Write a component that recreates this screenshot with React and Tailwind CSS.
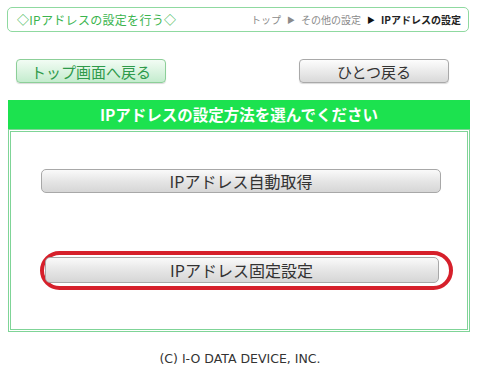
export default function App() {
  const jp = { fontFamily: '"Noto Sans CJK JP", "Noto Sans", sans-serif' };
  return (
    <div className="w-[480px] h-[381px] bg-white overflow-hidden" style={jp}>
      <div className="pt-[7px] pl-[7px] pr-[11px]">
        <div className="h-[25px] border border-[#8fd9a0] rounded-[5px] flex items-center justify-between pl-[9px] pr-[7px]">
          <span className="text-[12px] leading-none text-[#3bb54f] tracking-[0.3px]">◇IPアドレスの設定を行う◇</span>
          <span className="text-[10px] leading-none text-[#8a8a8a] flex items-center">
            <span>トップ</span>
            <span className="text-[8px] mx-[6px]">▶</span>
            <span>その他の設定</span>
            <span className="text-[8px] mx-[6px] text-[#111]">▶</span>
            <span className="font-bold text-[#222]">IPアドレスの設定</span>
          </span>
        </div>
      </div>

      <div className="mt-[27px] pl-[16px] pr-[31px] flex justify-between">
        <div className="w-[150px] h-[24px] rounded-[4px] border border-[#8ccf98] bg-gradient-to-b from-[#f2fcf4] to-[#c4ecce] flex items-center justify-center text-[15px] leading-none text-[#2e9a4a] shadow-[0_1px_1px_rgba(0,0,0,0.15)]">
          トップ画面へ戻る
        </div>
        <div className="w-[150px] h-[24px] rounded-[4px] border border-[#a9a9a9] bg-gradient-to-b from-[#fdfdfd] to-[#d9d9d9] flex items-center justify-center text-[15px] leading-none text-[#333] shadow-[0_1px_1px_rgba(0,0,0,0.15)]">
          ひとつ戻る
        </div>
      </div>

      <div className="mt-[17px] ml-[8px] w-[462px]">
        <div className="h-[29px] bg-[#1ce24f] flex items-center justify-center text-white font-bold text-[15.5px] leading-none">
          IPアドレスの設定方法を選んでください
        </div>
        <div className="border border-[#7fd497] p-[1px]">
          <div className="h-[199px] border border-[#7fd497] flex flex-col items-center pt-[37px]">
            <div className="ml-[4px] w-[400px] h-[24px] rounded-[5px] border border-[#a8a8a8] bg-gradient-to-b from-[#fafafa] via-[#e6e6e6] to-[#d6d6d6] flex items-center justify-center text-[16px] leading-none text-[#333]">
              IPアドレス自動取得
            </div>
            <div className="mt-[58px] ml-[14px] w-[413px] h-[39px] rounded-[20px] border-[4px] border-[#d6202b] pl-[1px] pr-[11px] pt-[2px]">
              <div className="w-[394px] h-[26px] rounded-[5px] border border-[#a8a8a8] bg-gradient-to-b from-[#fafafa] via-[#e6e6e6] to-[#d6d6d6] flex items-center justify-center text-[16px] leading-none text-[#333]">
                IPアドレス固定設定
              </div>
            </div>
          </div>
        </div>
      </div>

      <div className="mt-[21px] text-center text-[12.5px] leading-none text-[#333]" style={{ fontFamily: '"DejaVu Sans", sans-serif' }}>
        (C) I-O DATA DEVICE, INC.
      </div>
    </div>
  );
}
